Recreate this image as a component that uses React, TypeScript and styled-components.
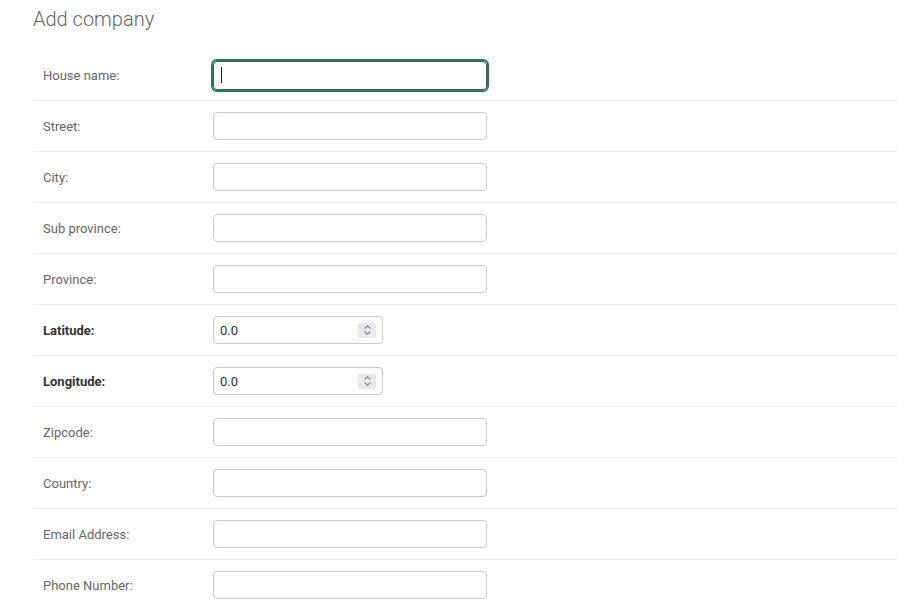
import { createGlobalStyle, styled } from 'styled-components';

type Field = {
  label: string;
  required?: boolean;
  kind?: 'text' | 'number';
  value?: string;
};

const fields: Field[] = [
  { label: 'House name:' },
  { label: 'Street:' },
  { label: 'City:' },
  { label: 'Sub province:' },
  { label: 'Province:' },
  { label: 'Latitude:', required: true, kind: 'number', value: '0.0' },
  { label: 'Longitude:', required: true, kind: 'number', value: '0.0' },
  { label: 'Zipcode:' },
  { label: 'Country:' },
  { label: 'Email Address:' },
  { label: 'Phone Number:' },
];

function Spinner() {
  return (
    <SpinBox>
      <svg width="9" height="12" viewBox="0 0 9 12" fill="none" stroke="#8a8a8a" strokeWidth="1.1">
        <path d="M1.5 4.5 L4.5 1.8 L7.5 4.5" />
        <path d="M1.5 7.5 L4.5 10.2 L7.5 7.5" />
      </svg>
    </SpinBox>
  );
}

export default function App() {
  return (
    <>
      <GlobalStyle />
      <Content>
        <Title>Add company</Title>
        <Fieldset>
          {fields.map((f, i) => (
            <Row key={f.label}>
              <Label $required={!!f.required}>{f.label}</Label>
              {f.kind === 'number' ? (
                <NumberBox>
                  <NumberInput type="text" defaultValue={f.value} />
                  <Spinner />
                </NumberBox>
              ) : (
                <InputWrap>
                  <TextInput type="text" $focused={i === 0} autoFocus={i === 0} />
                  {i === 0 && <Caret />}
                </InputWrap>
              )}
            </Row>
          ))}
        </Fieldset>
      </Content>
    </>
  );
}

const GlobalStyle = createGlobalStyle`
  body {
    margin: 0;
    background: #fff;
    font-family: Roboto, "Liberation Sans", sans-serif;
  }
`;

const Content = styled.div`
  padding-left: 33px;
`;

const Title = styled.h1`
  margin: 0;
  box-sizing: border-box;
  height: 50px;
  padding-top: 7px;
  font-size: 20px;
  line-height: 24px;
  font-weight: 300;
  color: #666;
`;

const Fieldset = styled.div`
  display: flex;
  flex-direction: column;
`;

const Row = styled.div`
  display: flex;
  align-items: center;
  box-sizing: border-box;
  height: 51px;
  padding: 10px;
  border-bottom: 1px solid #eee;
`;

const Label = styled.label<{ $required: boolean }>`
  width: 160px;
  margin-right: 10px;
  font-size: 13px;
  font-weight: ${({ $required }) => ($required ? 700 : 400)};
  color: ${({ $required }) => ($required ? '#333' : '#666')};
`;

const InputWrap = styled.div`
  position: relative;
  display: flex;
`;

const Caret = styled.span`
  position: absolute;
  left: 8px;
  top: 6px;
  width: 1px;
  height: 16px;
  background: #222;
  pointer-events: none;
`;

const TextInput = styled.input<{ $focused: boolean }>`
  box-sizing: border-box;
  width: 274px;
  height: ${({ $focused }) => ($focused ? '29px' : '28px')};
  padding: 5px 6px;
  border: 1px solid ${({ $focused }) => ($focused ? '#555' : '#ccc')};
  border-radius: 4px;
  font-family: Roboto, "Liberation Sans", sans-serif;
  font-size: 13px;
  color: #333;
  caret-color: transparent;
  outline: ${({ $focused }) => ($focused ? '2px solid #18805c' : 'none')};
  outline-offset: 0;

  &:focus {
    outline: 2px solid #18805c;
    border-color: #555;
  }
`;

const NumberBox = styled.div`
  display: flex;
  align-items: center;
  box-sizing: border-box;
  width: 170px;
  height: 28px;
  padding: 0 6px;
  border: 1px solid #ccc;
  border-radius: 4px;
`;

const NumberInput = styled.input`
  flex: 1;
  min-width: 0;
  padding: 0;
  border: none;
  outline: none;
  font-family: Roboto, "Liberation Sans", sans-serif;
  font-size: 13px;
  color: #333;
`;

const SpinBox = styled.span`
  display: flex;
  align-items: center;
  justify-content: center;
  width: 18px;
  height: 15px;
  background: #e9e9ed;
  border-radius: 2px;
`;
